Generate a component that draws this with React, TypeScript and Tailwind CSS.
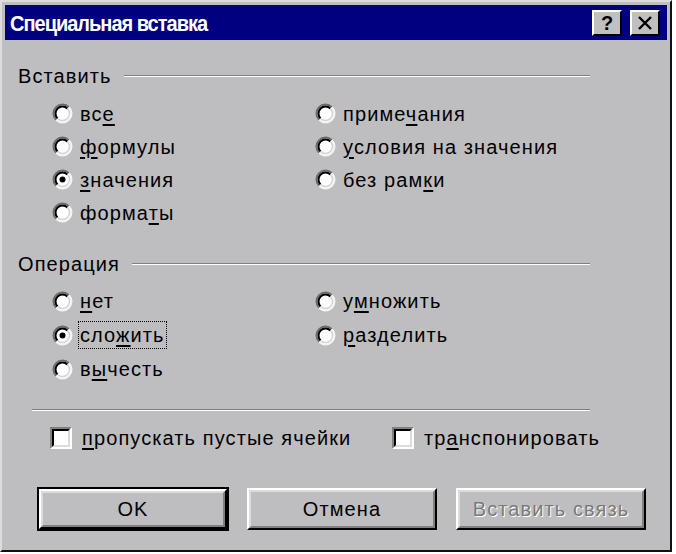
import React from "react";

type Opt = { pre: string; key: string; post: string; checked?: boolean; focus?: boolean };

const insertLeft: Opt[] = [
  { pre: "вс", key: "е", post: "" },
  { pre: "", key: "ф", post: "ормулы" },
  { pre: "", key: "з", post: "начения", checked: true },
  { pre: "форма", key: "т", post: "ы" },
];
const insertRight: Opt[] = [
  { pre: "приме", key: "ч", post: "ания" },
  { pre: "", key: "у", post: "словия на значения" },
  { pre: "без рам", key: "к", post: "и" },
];
const opLeft: Opt[] = [
  { pre: "", key: "н", post: "ет" },
  { pre: "сло", key: "ж", post: "ить", checked: true, focus: true },
  { pre: "в", key: "ы", post: "честь" },
];
const opRight: Opt[] = [
  { pre: "у", key: "м", post: "ножить" },
  { pre: "", key: "р", post: "азделить" },
];

// win95-ish radio: dark arc top-left, light arc bottom-right
const Radio = ({ checked }: { checked?: boolean }) => (
  <svg width="21" height="21" viewBox="0 0 21 21" className="shrink-0">
    <circle cx="10.5" cy="10.5" r="9" fill="#ffffff" />
    <path d="M4.13 16.87 A9 9 0 0 1 16.87 4.13" stroke="#6a6a6a" strokeWidth="2" fill="none" />
    <path d="M16.87 4.13 A9 9 0 0 1 4.13 16.87" stroke="#f4f4f4" strokeWidth="2" fill="none" />
    <path d="M5.55 15.45 A7 7 0 0 1 15.45 5.55" stroke="#000000" strokeWidth="2" fill="none" />
    <path d="M15.45 5.55 A7 7 0 0 1 5.55 15.45" stroke="#d4d4d4" strokeWidth="1.6" fill="none" />
    {checked && <circle cx="10.5" cy="10.5" r="3" fill="#000000" />}
  </svg>
);

const Label = ({ o }: { o: Opt }) => (
  <span>
    {o.pre}
    <span className="underline underline-offset-[3px] decoration-[1.5px]">{o.key}</span>
    {o.post}
  </span>
);

const RadioRow = ({ o, h }: { o: Opt; h: string }) => (
  <div className={`flex items-center ${h}`}>
    <Radio checked={o.checked} />
    {o.focus ? (
      <span className="ml-[5px] border border-dotted border-black px-[1px] leading-[26px]">
        <Label o={o} />
      </span>
    ) : (
      <span className="ml-[7px]">
        <Label o={o} />
      </span>
    )}
  </div>
);

const Check = () => (
  <div className="w-[22px] h-[22px] border-2 border-t-[#808080] border-l-[#808080] border-r-white border-b-white shrink-0">
    <div className="w-full h-full border-2 border-t-black border-l-black border-r-[#dcdcdc] border-b-[#dcdcdc] bg-white" />
  </div>
);

const GroupHeader = ({ title }: { title: string }) => (
  <div className="flex items-center h-[24px] pl-[13px] pr-[77px]">
    <span>{title}</span>
    <div className="flex-1 ml-[12px] border-t border-t-[#808080] border-b border-b-white" />
  </div>
);

const Button = ({ children, isDefault, disabled }: { children: React.ReactNode; isDefault?: boolean; disabled?: boolean }) => {
  const inner = (
    <div className="w-full h-full border-2 border-t-white border-l-white border-r-black border-b-black">
      <div className="w-full h-full border-2 border-t-[#dcdcdc] border-l-[#dcdcdc] border-r-[#808080] border-b-[#808080] flex items-center justify-center">
        <span className={disabled ? "text-[#7a7a7a] [text-shadow:1px_1px_0_#ffffff]" : "text-black"}>{children}</span>
      </div>
    </div>
  );
  return isDefault ? (
    <div className="w-[192px] h-[44px] border-2 border-black">{inner}</div>
  ) : (
    <div className="w-[192px] h-[44px] p-[1px]">{inner}</div>
  );
};

const TitleButton = ({ children }: { children: React.ReactNode }) => (
  <div className="w-[30px] h-[26px] bg-[#c0c0c0] border-2 border-t-white border-l-white border-r-black border-b-black flex items-center justify-center">
    {children}
  </div>
);

export default function App() {
  return (
    <div className="w-[676px] h-[554px] bg-white font-['Liberation_Sans',Arial,sans-serif] text-[20px] tracking-[1.1px] text-black">
      <div className="w-[672px] h-[552px] border-2 border-t-[#dcdcdc] border-l-[#dcdcdc] border-r-[#111111] border-b-[#111111] bg-[#bebdc0] p-[3px] flex flex-col">
        <div className="h-[35px] bg-[#000080] flex items-center justify-between pl-[5px] pr-[7px]">
          <span className="text-white font-bold text-[20px] tracking-[-1px] scale-y-110">Специальная вставка</span>
          <div className="flex items-center gap-[8px]">
            <TitleButton>
              <span className="font-bold text-[20px] tracking-normal leading-none">?</span>
            </TitleButton>
            <TitleButton>
              <svg width="16" height="14" viewBox="0 0 16 14">
                <path d="M2 1 L14 13 M14 1 L2 13" stroke="#000000" strokeWidth="2.4" />
              </svg>
            </TitleButton>
          </div>
        </div>

        <div className="mt-[24px]">
          <GroupHeader title="Вставить" />
        </div>
        <div className="mt-[9px] flex pl-[47px]">
          <div className="w-[263px]">
            {insertLeft.map((o) => (
              <RadioRow key={o.pre + o.key} o={o} h="h-[33px]" />
            ))}
          </div>
          <div>
            {insertRight.map((o) => (
              <RadioRow key={o.pre + o.key} o={o} h="h-[33px]" />
            ))}
          </div>
        </div>

        <div className="mt-[23px]">
          <GroupHeader title="Операция" />
        </div>
        <div className="mt-[8px] flex pl-[47px]">
          <div className="w-[263px]">
            {opLeft.map((o) => (
              <RadioRow key={o.pre + o.key} o={o} h="h-[34px]" />
            ))}
          </div>
          <div>
            {opRight.map((o) => (
              <RadioRow key={o.pre + o.key} o={o} h="h-[34px]" />
            ))}
          </div>
        </div>

        <div className="mt-[23px] ml-[27px] mr-[77px] border-t border-t-[#808080] border-b border-b-white" />

        <div className="mt-[16px] flex items-center h-[22px] pl-[45px]">
          <div className="w-[342px] flex items-center">
            <Check />
            <span className="ml-[10px]">
              <span className="underline underline-offset-[3px] decoration-[1.5px]">п</span>ропускать пустые ячейки
            </span>
          </div>
          <div className="flex items-center">
            <Check />
            <span className="ml-[10px]">
              тр<span className="underline underline-offset-[3px] decoration-[1.5px]">а</span>нспонировать
            </span>
          </div>
        </div>

        <div className="mt-[38px] flex gap-[17px] pl-[32px]">
          <Button isDefault>OK</Button>
          <Button>Отмена</Button>
          <Button disabled>Вставить связь</Button>
        </div>
      </div>
    </div>
  );
}
